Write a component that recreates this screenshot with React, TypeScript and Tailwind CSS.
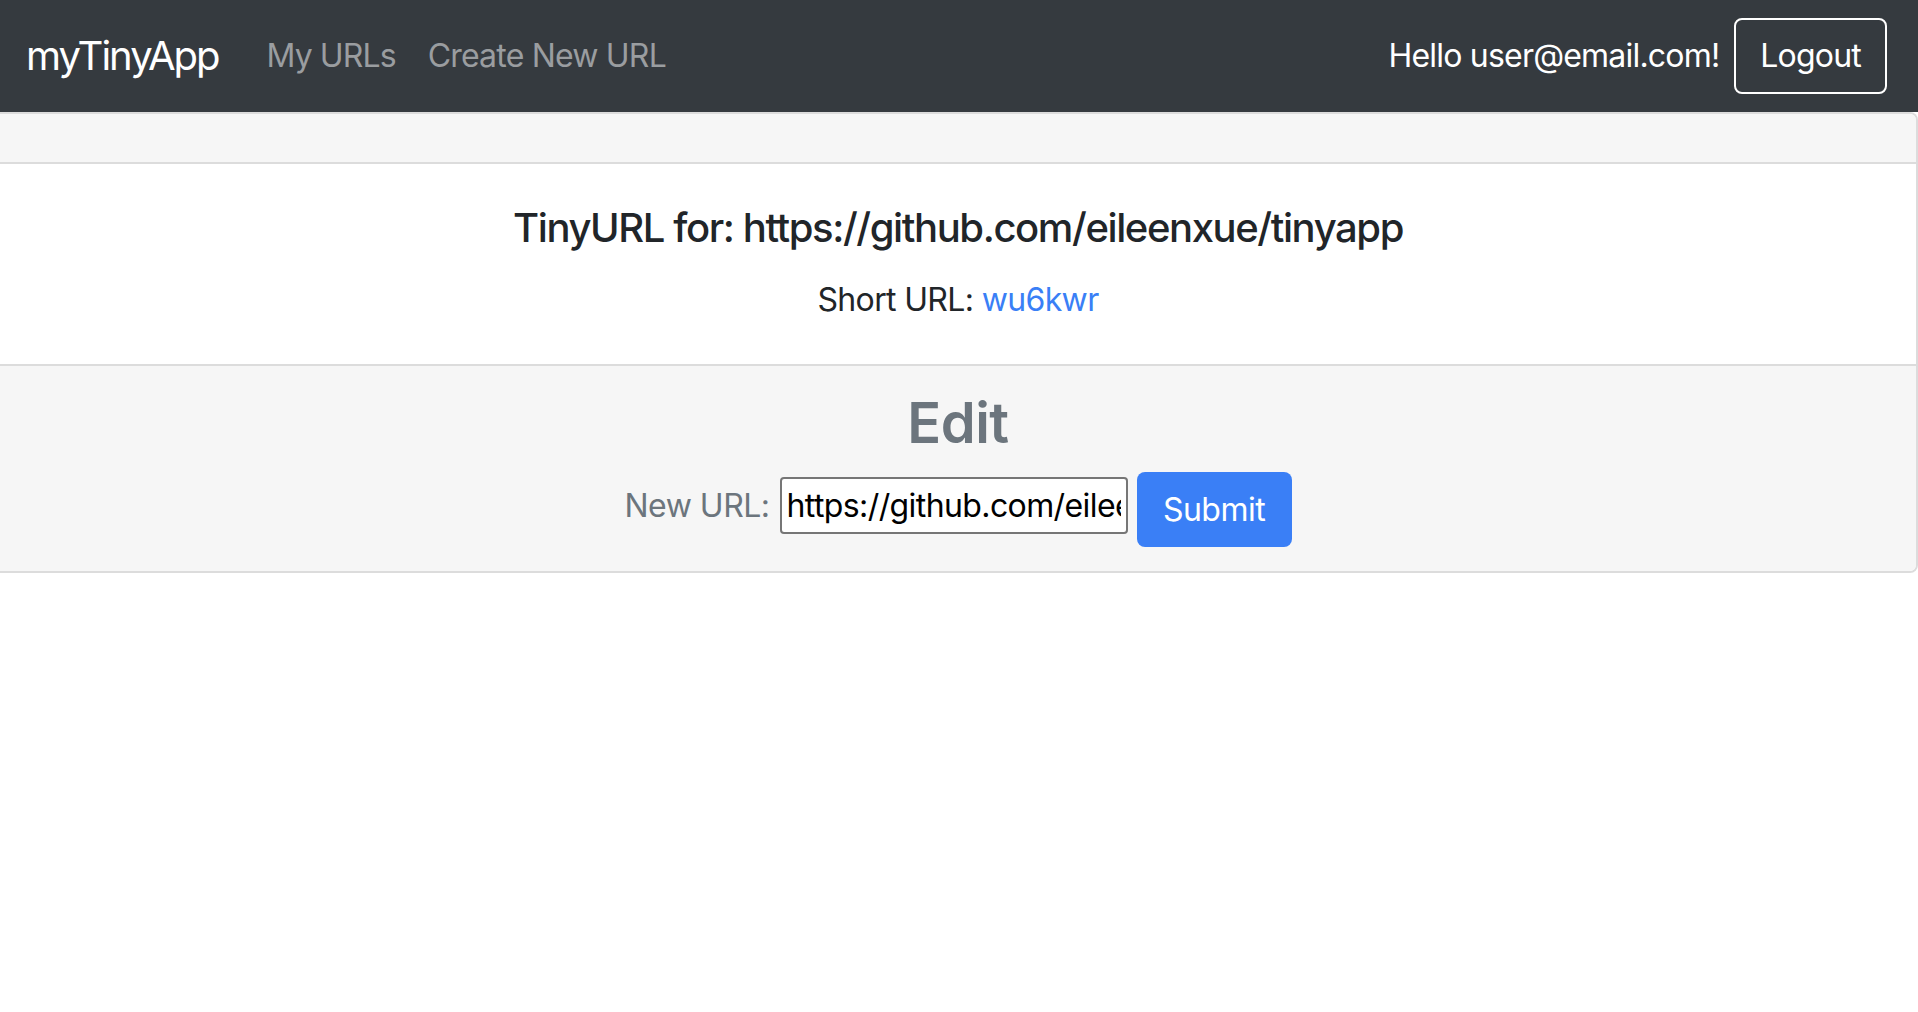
const font = { fontFamily: "Inter, 'Noto Sans', sans-serif" }

function Navbar() {
  return (
    <nav className="h-[112px] bg-[#353a3f] flex items-center justify-between pl-[26px] pr-[31px]">
      <div className="flex items-center">
        <a className="text-[40px] leading-[60px] text-white mr-[32px] tracking-[-2px]">myTinyApp</a>
        <a className="text-[32px] leading-[48px] text-[#9a9da0] px-[16px] tracking-[-0.9px]">My URLs</a>
        <a className="text-[32px] leading-[48px] text-[#9a9da0] px-[16px] tracking-[-0.8px]">Create New URL</a>
      </div>
      <div className="flex items-center gap-[15px]">
        <span className="text-[32px] leading-[48px] text-white tracking-[-0.8px]">Hello user@email.com!</span>
        <button className="h-[76px] px-[24px] border-2 border-white rounded-[8px] text-[32px] leading-[48px] text-white tracking-[-0.8px]">
          Logout
        </button>
      </div>
    </nav>
  )
}

export default function App() {
  return (
    <div style={font} className="min-h-[1012px] bg-white text-[#212529]">
      <Navbar />
      <div className="border-y-2 border-r-2 border-[#dcdcdc] rounded-r-[8px] overflow-hidden">
        {/* card-header */}
        <div className="h-[50px] bg-[#f6f6f6] border-b-2 border-[#dcdcdc]" />

        {/* card-body */}
        <div className="bg-white p-[40px] text-center">
          <h5 className="text-[40px] leading-[48px] font-medium mb-[24px] tracking-[-1.4px]">
            TinyURL for: https://github.com/eileenxue/tinyapp
          </h5>
          <p className="text-[32px] leading-[48px] tracking-[-0.65px]">
            Short URL: <a className="text-[#3a7ff6]">wu6kwr</a>
          </p>
        </div>

        {/* card-footer */}
        <div className="bg-[#f6f6f6] border-t-2 border-[#dcdcdc] pt-[24px] pb-[24px] text-center text-[#6c757d]">
          <h3 className="text-[56px] leading-[67px] font-semibold mb-[15px] tracking-[-0.5px]">Edit</h3>
          <form className="flex items-start justify-center">
            <label className="mt-[10px] text-[32px] leading-[48px] tracking-[-0.5px] mr-[10px]">New URL:</label>
            <input
              type="text"
              readOnly
              value="https://github.com/eileenxue/tinyapp"
              className="mt-[5px] w-[348px] h-[57px] border-2 border-[#767676] rounded-[4px] bg-white px-[5px] text-[32px] text-black tracking-[-0.6px] outline-none mr-[9px]"
            />
            <button
              type="button"
              className="h-[75px] w-[155px] rounded-[8px] bg-[#3a7ff6] text-white text-[32px] leading-[48px] tracking-[-0.5px]"
            >
              Submit
            </button>
          </form>
        </div>
      </div>
    </div>
  )
}
